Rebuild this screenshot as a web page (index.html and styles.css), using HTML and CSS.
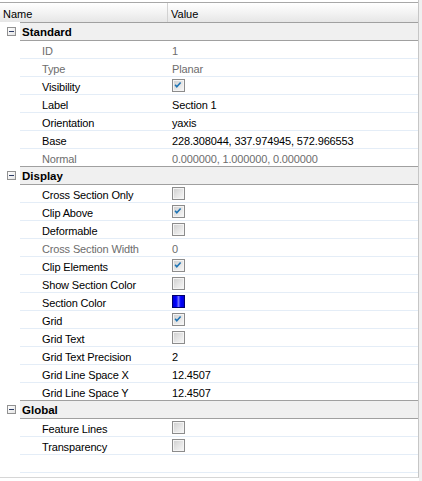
FILE: index.html
```html
<!DOCTYPE html>
<html>
<head>
<meta charset="utf-8">
<link rel="stylesheet" href="styles.css">
</head>
<body>
<div class="wrap">
  <div class="grid">
    <div class="head">
      <div class="hname">Name</div>
      <div class="hval">Value</div>
    </div>

    <div class="cat"><div class="tog"><span class="box"><span class="minus"></span></span></div><div class="catlabel">Standard</div></div>
    <div class="row dis"><div class="name">ID</div><div class="val">1</div></div>
    <div class="row dis"><div class="name">Type</div><div class="val">Planar</div></div>
    <div class="row"><div class="name">Visibility</div><div class="val cb"><span class="chk on"><svg viewBox="0 0 13 13" width="11" height="11"><polyline points="2.5,5.5 4.5,8 9,3" /></svg></span></div></div>
    <div class="row"><div class="name">Label</div><div class="val">Section 1</div></div>
    <div class="row"><div class="name">Orientation</div><div class="val">yaxis</div></div>
    <div class="row"><div class="name">Base</div><div class="val">228.308044, 337.974945, 572.966553</div></div>
    <div class="row dis"><div class="name">Normal</div><div class="val">0.000000, 1.000000, 0.000000</div></div>

    <div class="cat"><div class="tog"><span class="box"><span class="minus"></span></span></div><div class="catlabel">Display</div></div>
    <div class="row"><div class="name">Cross Section Only</div><div class="val cb"><span class="chk"></span></div></div>
    <div class="row"><div class="name">Clip Above</div><div class="val cb"><span class="chk on"><svg viewBox="0 0 13 13" width="11" height="11"><polyline points="2.5,5.5 4.5,8 9,3" /></svg></span></div></div>
    <div class="row"><div class="name">Deformable</div><div class="val cb"><span class="chk"></span></div></div>
    <div class="row dis"><div class="name">Cross Section Width</div><div class="val">0</div></div>
    <div class="row"><div class="name">Clip Elements</div><div class="val cb"><span class="chk on"><svg viewBox="0 0 13 13" width="11" height="11"><polyline points="2.5,5.5 4.5,8 9,3" /></svg></span></div></div>
    <div class="row"><div class="name">Show Section Color</div><div class="val cb"><span class="chk"></span></div></div>
    <div class="row"><div class="name">Section Color</div><div class="val cb"><span class="swatch"></span></div></div>
    <div class="row"><div class="name">Grid</div><div class="val cb"><span class="chk on"><svg viewBox="0 0 13 13" width="11" height="11"><polyline points="2.5,5.5 4.5,8 9,3" /></svg></span></div></div>
    <div class="row"><div class="name">Grid Text</div><div class="val cb"><span class="chk"></span></div></div>
    <div class="row"><div class="name">Grid Text Precision</div><div class="val">2</div></div>
    <div class="row"><div class="name">Grid Line Space X</div><div class="val">12.4507</div></div>
    <div class="row"><div class="name">Grid Line Space Y</div><div class="val">12.4507</div></div>

    <div class="cat"><div class="tog"><span class="box"><span class="minus"></span></span></div><div class="catlabel">Global</div></div>
    <div class="row"><div class="name">Feature Lines</div><div class="val cb"><span class="chk"></span></div></div>
    <div class="row"><div class="name">Transparency</div><div class="val cb"><span class="chk"></span></div></div>
    <div class="row empty"></div>
  </div>
  <div class="strip"></div>
</div>
</body>
</html>
```

FILE: styles.css
```css
* { box-sizing: border-box; }

body {
  margin: 0;
  background: #ffffff;
  font-family: "Liberation Sans", Arial, sans-serif;
  font-size: 11px;
  color: #000000;
}

.wrap {
  display: flex;
  width: 422px;
  height: 481px;
}

.grid {
  width: 419px;
  height: 478px;
  padding-top: 2px;
  padding-bottom: 4px;
  border-right: 1px solid #c6c6c6;
  border-bottom: 1px solid #d6d6d6;
  display: flex;
  flex-direction: column;
}

.strip {
  flex: 1;
  background: #f0f0f0;
}

.head {
  display: flex;
  height: 21px;
  border-top: 1px solid #a8a8a8;
  border-bottom: 1px solid #a0a0a0;
  background: linear-gradient(#ffffff, #f2f2f2 55%, #e6e6e6);
  line-height: 14px;
}

.hname {
  width: 168px;
  padding: 4px 0 0 3px;
  border-right: 1px solid #d2d2d2;
}

.hval {
  padding: 4px 0 0 3px;
}

.cat {
  display: flex;
  height: 19px;
  margin-top: -1px;
  flex: none;
}

.tog {
  width: 20px;
  background: #ffffff;
  padding: 5px 0 0 7px;
}

.box {
  display: block;
  width: 9px;
  height: 9px;
  border: 1px solid #919191;
  background: linear-gradient(135deg, #ffffff, #e4e4e4);
  padding: 3px 1px 0 1px;
}

.minus {
  display: block;
  width: 5px;
  height: 1px;
  background: #2c3c66;
}

.catlabel {
  flex: 1;
  background: #f0f0f0;
  border-top: 1px solid #a0a0a0;
  border-bottom: 1px solid #a0a0a0;
  padding: 2px 0 0 2px;
  font-weight: bold;
  font-size: 11.5px;
  line-height: 14px;
}

.row {
  display: flex;
  flex: none;
  height: 18px;
  margin-left: 20px;
  border-bottom: 1px solid #e4edf7;
  line-height: 14px;
  letter-spacing: -0.15px;
}

.name {
  width: 152px;
  padding: 3px 0 0 22px;
  white-space: nowrap;
}

.val {
  padding-top: 3px;
  white-space: nowrap;
}

.val.cb {
  padding-top: 2px;
}

.dis .name,
.dis .val {
  color: #6d6d6d;
}

.chk {
  display: block;
  width: 13px;
  height: 13px;
  border: 1px solid #8c8c8c;
  background: linear-gradient(135deg, #cdcdcd 0%, #e4e4e4 50%, #f8f8f8 100%);
  box-shadow: inset 0 0 0 1px #f4f4f4;
}

.chk svg {
  display: block;
}

.chk svg polyline {
  fill: none;
  stroke: #1f74b4;
  stroke-width: 1.9;
}

.swatch {
  display: block;
  width: 13px;
  height: 13px;
  border: 1px solid #00006a;
  background: linear-gradient(90deg, #0000d8 0%, #0000ff 30%, #6f6fff 50%, #0000ff 70%, #0000d8 100%);
}
```
